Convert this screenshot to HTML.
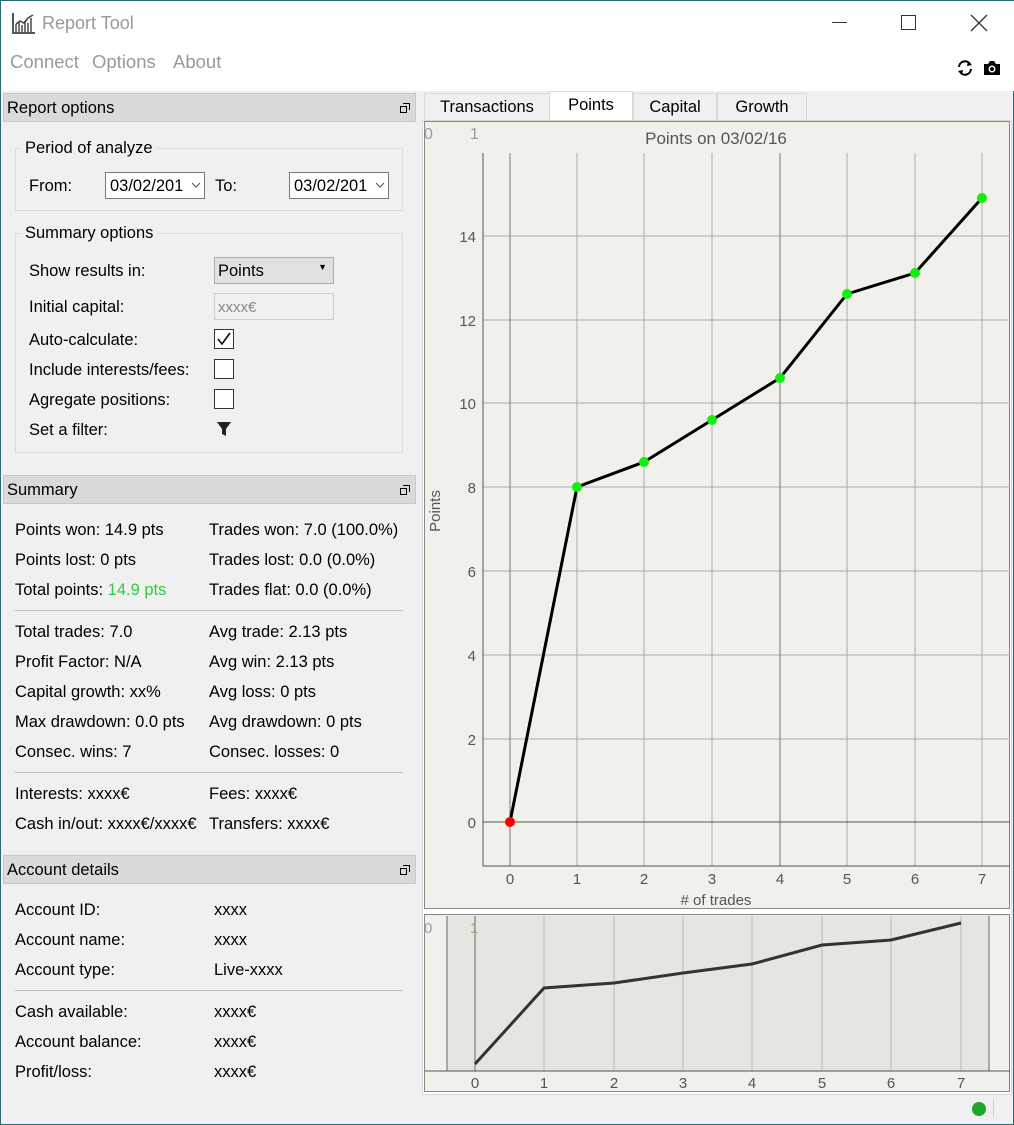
<!DOCTYPE html>
<html><head><meta charset="utf-8"><style>
*{margin:0;padding:0;box-sizing:border-box}
body{width:1014px;height:1125px;background:#f0f0f0;font-family:"Liberation Sans",sans-serif;font-size:16.5px;color:#000;position:relative;overflow:hidden;border:1px solid #2b6a78}
.a{position:absolute;white-space:nowrap}
.hdr{position:absolute;left:2px;width:413px;height:29px;background:#dadada;border:1px solid #c8c8c8;padding:5px 3px;font-size:16.5px}
.hdr svg{position:absolute;right:5px;top:9px}
.grp{position:absolute;border:1px solid #dcdcdc}
.cb{position:absolute;width:20px;height:20px;border:1px solid #333;background:#fff}
.sep{position:absolute;left:14px;width:388px;height:1px;background:#c0c0c0}
.dt{position:absolute;height:27px;border:1px solid #7a7a7a;background:#fff;padding:4px 4px;font-size:16.5px;overflow:hidden}
.dt svg{position:absolute;right:3px;top:9px}
.tab{position:absolute;top:92px;height:28px;border:1px solid #d9d9d9;background:#f0f0f0;padding:4px 0;text-align:center}
</style></head><body>
<div class="a" style="left:0;top:0;width:1014px;height:90px;background:#fff"></div>
<svg class="a" style="left:11px;top:11px" width="24" height="22"><path d="M1 1V21H23" stroke="#555" stroke-width="2" fill="none"/><path d="M4 20V12M7 20V10M10 20V13M13 20V9M16 20V11M19 20V6" stroke="#777" stroke-width="2"/><path d="M4 12L8 9L12 11L16 6L21 3" stroke="#444" stroke-width="1.5" fill="none"/></svg>
<div class="a" style="left:41px;top:12px;font-size:18px;color:#999">Report Tool</div>
<div class="a" style="left:831px;top:21px;width:15px;height:1px;background:#333"></div>
<div class="a" style="left:900px;top:14px;width:15px;height:15px;border:1px solid #333"></div>
<svg class="a" style="left:969px;top:13px" width="18" height="18"><path d="M1 1L17 17M17 1L1 17" stroke="#333" stroke-width="1.3"/></svg>
<div class="a" style="left:9px;top:50px;font-size:18.5px;color:#999">Connect</div>
<div class="a" style="left:91px;top:50px;font-size:18.5px;color:#999">Options</div>
<div class="a" style="left:172px;top:50px;font-size:18.5px;color:#999">About</div>
<svg class="a" style="left:955px;top:58px" width="18" height="18"><path d="M3 8A6 6 0 0 1 14 5M15 10A6 6 0 0 1 4 13" stroke="#000" stroke-width="2" fill="none"/><path d="M12 2L16 6L11 7Z M6 16L2 12L7 11Z" fill="#000"/></svg>
<svg class="a" style="left:982px;top:59px" width="18" height="16"><path d="M1 4H5L7 1H11L13 4H17V15H1Z" fill="#000"/><circle cx="9" cy="9" r="3.5" fill="#fff"/><circle cx="9" cy="9" r="2" fill="#000"/></svg>

<div class="hdr" style="top:92px">Report options<svg width="10" height="10"><path d="M3 .5H9.5V7M.5 3.5H6.5V9.5H.5Z" fill="none" stroke="#000"/></svg></div>
<div class="grp" style="left:14px;top:147px;width:388px;height:63px"></div>
<div class="a" style="left:20px;top:138px;background:#f0f0f0;padding:0 4px">Period of analyze</div>
<div class="a" style="left:28px;top:176px">From:</div>
<div class="dt" style="left:104px;top:171px;width:100px">03/02/201<svg width="10" height="6"><path d="M1 1L5 5L9 1" stroke="#555" fill="none"/></svg></div>
<div class="a" style="left:214px;top:176px">To:</div>
<div class="dt" style="left:288px;top:171px;width:100px">03/02/201<svg width="10" height="6"><path d="M1 1L5 5L9 1" stroke="#555" fill="none"/></svg></div>
<div class="grp" style="left:14px;top:232px;width:388px;height:220px"></div>
<div class="a" style="left:20px;top:223px;background:#f0f0f0;padding:0 4px">Summary options</div>
<div class="a" style="left:28px;top:261px">Show results in:</div>
<div class="a" style="left:213px;top:256px;width:120px;height:27px;border:1px solid #adadad;background:#e1e1e1;padding:4px 3px">Points<span style="position:absolute;right:6px;top:4px;font-size:9px">▼</span></div>
<div class="a" style="left:28px;top:297px">Initial capital:</div>
<div class="a" style="left:213px;top:292px;width:120px;height:27px;border:1px solid #ccc;background:#f0f0f0;padding:5px 3px;color:#888;font-size:15px">xxxx€</div>
<div class="a" style="left:28px;top:330px">Auto-calculate:</div>
<div class="cb" style="left:213px;top:328px"><svg width="18" height="18"><path d="M3 9L7 14L15 3" stroke="#000" stroke-width="1.5" fill="none"/></svg></div>
<div class="a" style="left:28px;top:360px">Include interests/fees:</div>
<div class="cb" style="left:213px;top:358px"></div>
<div class="a" style="left:28px;top:390px">Agregate positions:</div>
<div class="cb" style="left:213px;top:388px"></div>
<div class="a" style="left:28px;top:420px">Set a filter:</div>
<svg class="a" style="left:215px;top:420px" width="16" height="16"><path d="M1 1H15L10 8V15L6 13V8Z" fill="#222"/></svg>

<div class="hdr" style="top:474px">Summary<svg width="10" height="10"><path d="M3 .5H9.5V7M.5 3.5H6.5V9.5H.5Z" fill="none" stroke="#000"/></svg></div>
<div class="a" style="left:14px;top:520px">Points won: 14.9 pts</div><div class="a" style="left:208px;top:520px">Trades won: 7.0 (100.0%)</div>
<div class="a" style="left:14px;top:550px">Points lost: 0 pts</div><div class="a" style="left:208px;top:550px">Trades lost: 0.0 (0.0%)</div>
<div class="a" style="left:14px;top:580px">Total points: <span style="color:#2ecc40">14.9 pts</span></div><div class="a" style="left:208px;top:580px">Trades flat: 0.0 (0.0%)</div>
<div class="sep" style="top:609px"></div>
<div class="a" style="left:14px;top:622px">Total trades: 7.0</div><div class="a" style="left:208px;top:622px">Avg trade: 2.13 pts</div>
<div class="a" style="left:14px;top:652px">Profit Factor: N/A</div><div class="a" style="left:208px;top:652px">Avg win: 2.13 pts</div>
<div class="a" style="left:14px;top:682px">Capital growth: xx%</div><div class="a" style="left:208px;top:682px">Avg loss: 0 pts</div>
<div class="a" style="left:14px;top:712px">Max drawdown: 0.0 pts</div><div class="a" style="left:208px;top:712px">Avg drawdown: 0 pts</div>
<div class="a" style="left:14px;top:742px">Consec. wins: 7</div><div class="a" style="left:208px;top:742px">Consec. losses: 0</div>
<div class="sep" style="top:771px"></div>
<div class="a" style="left:14px;top:784px">Interests: xxxx€</div><div class="a" style="left:208px;top:784px">Fees: xxxx€</div>
<div class="a" style="left:14px;top:814px">Cash in/out: xxxx€/xxxx€</div><div class="a" style="left:208px;top:814px">Transfers: xxxx€</div>

<div class="hdr" style="top:854px">Account details<svg width="10" height="10"><path d="M3 .5H9.5V7M.5 3.5H6.5V9.5H.5Z" fill="none" stroke="#000"/></svg></div>
<div class="a" style="left:14px;top:900px">Account ID:</div><div class="a" style="left:213px;top:900px">xxxx</div>
<div class="a" style="left:14px;top:930px">Account name:</div><div class="a" style="left:213px;top:930px">xxxx</div>
<div class="a" style="left:14px;top:960px">Account type:</div><div class="a" style="left:213px;top:960px">Live-xxxx</div>
<div class="sep" style="top:989px"></div>
<div class="a" style="left:14px;top:1002px">Cash available:</div><div class="a" style="left:213px;top:1002px">xxxx€</div>
<div class="a" style="left:14px;top:1032px">Account balance:</div><div class="a" style="left:213px;top:1032px">xxxx€</div>
<div class="a" style="left:14px;top:1062px">Profit/loss:</div><div class="a" style="left:213px;top:1062px">xxxx€</div>

<div class="tab" style="left:423px;width:126px">Transactions</div>
<div class="tab" style="left:548px;width:84px;top:90px;height:30px;background:#fff;border-bottom:none">Points</div>
<div class="tab" style="left:632px;width:84px">Capital</div>
<div class="tab" style="left:716px;width:90px">Growth</div>
<div class="a" style="left:421px;top:119px;width:590px;height:975px;background:#fff;border:1px solid #d9d9d9"></div>

<svg class="a" style="left:423px;top:120px" width="586" height="788" font-family="Liberation Sans,DejaVu Sans,sans-serif">
<rect x="0.5" y="0.5" width="585" height="787" fill="#f1f1ec" stroke="#888"/>
<text x="0" y="18" font-size="16" fill="#999">0</text><text x="46" y="18" font-size="16" fill="#999">1</text>
<text x="292" y="23" font-size="17" fill="#555" text-anchor="middle">Points on 03/02/16</text>
<g stroke="#aaa" stroke-width="1" fill="none">
<path d="M153 32V745M220 32V745M288 32V745M423 32V745M491 32V745M558 32V745"/>
<path d="M59 115H586M59 199H586M59 282H586M59 366H586M59 450H586M59 534H586M59 618H586"/>
</g>
<path d="M86 32V745M356 32V745" stroke="#777" fill="none"/>
<path d="M59 32V745H586M59 701H586" stroke="#555" fill="none"/>
<g font-size="15" fill="#555" text-anchor="end">
<text x="52" y="121">14</text><text x="52" y="205">12</text><text x="52" y="288">10</text><text x="52" y="372">8</text><text x="52" y="456">6</text><text x="52" y="540">4</text><text x="52" y="624">2</text><text x="52" y="707">0</text></g>
<g font-size="15" fill="#555" text-anchor="middle">
<text x="86" y="763">0</text><text x="153" y="763">1</text><text x="220" y="763">2</text><text x="288" y="763">3</text><text x="356" y="763">4</text><text x="423" y="763">5</text><text x="491" y="763">6</text><text x="558" y="763">7</text>
<text x="292" y="784">#  of trades</text></g>
<text transform="translate(16 390) rotate(-90)" font-size="15" fill="#555" text-anchor="middle">Points</text>
<polyline points="86,701 153,366 220,341 288,299 356,257 423,173 491,152 558,77" fill="none" stroke="#000" stroke-width="3"/>
<g fill="#11ee11"><circle cx="153" cy="366" r="5"/><circle cx="220" cy="341" r="5"/><circle cx="288" cy="299" r="5"/><circle cx="356" cy="257" r="5"/><circle cx="423" cy="173" r="5"/><circle cx="491" cy="152" r="5"/><circle cx="558" cy="77" r="5"/></g>
<circle cx="86" cy="701" r="5" fill="#f00"/>
</svg>

<svg class="a" style="left:423px;top:913px" width="586" height="178" font-family="Liberation Sans,DejaVu Sans,sans-serif">
<rect x="0.5" y="0.5" width="585" height="177" fill="#f1f1ec" stroke="#888"/>
<rect x="23" y="2" width="542" height="155" fill="#e6e6e1"/>
<path d="M23 2V157M565 2V157M51 2V157" stroke="#666"/>
<path d="M120 2V157M190 2V157M259 2V157M328 2V157M398 2V157M467 2V157M537 2V157" stroke="#bbb"/>
<path d="M1 157H586" stroke="#555"/>
<text x="0" y="19" font-size="15" fill="#999">0</text><text x="46" y="19" font-size="15" fill="#a98">1</text>
<g font-size="15" fill="#555" text-anchor="middle"><text x="51" y="174">0</text><text x="120" y="174">1</text><text x="190" y="174">2</text><text x="259" y="174">3</text><text x="328" y="174">4</text><text x="398" y="174">5</text><text x="467" y="174">6</text><text x="537" y="174">7</text></g>
<polyline points="51,150 120,74 190,69 259,59 328,50 398,31 467,26 537,9" fill="none" stroke="#333" stroke-width="3"/>
</svg>

<div class="a" style="left:971px;top:1101px;width:14px;height:14px;border-radius:50%;background:#1ea52a"></div>
<div class="a" style="left:992px;top:1098px;width:1px;height:18px;background:#ccc"></div>
</body></html>
